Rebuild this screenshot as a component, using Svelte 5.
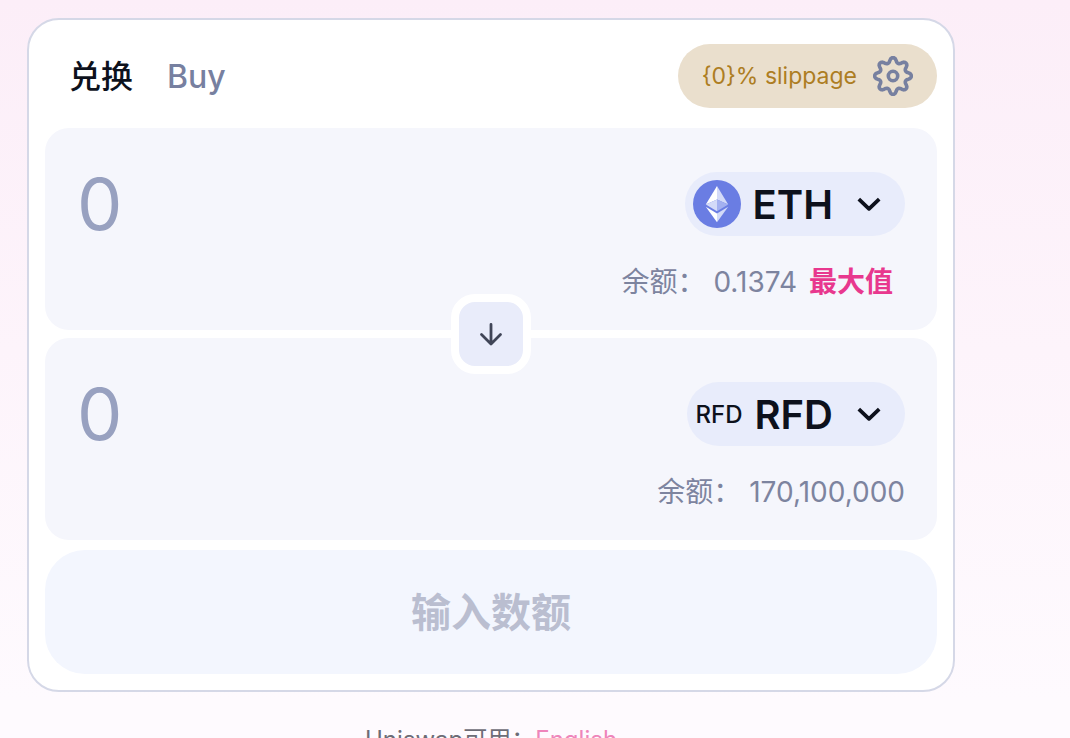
<script>
  let sell = $state('');
  let buy = $state('');

  // Outline of an eight-toothed gear with softly rounded teeth and valleys
  const gear = Array.from({ length: 96 }, (_, i) => {
    const t = (i / 96) * Math.PI * 2;
    const r = 15.9 + 2.4 * Math.tanh(1.2 * Math.cos(8 * t)) / Math.tanh(1.2);
    return `${(20 + r * Math.sin(t)).toFixed(2)},${(20 - r * Math.cos(t)).toFixed(2)}`;
  }).join(' ');
</script>

{#snippet chevron()}
  <svg class="chevron" width="24" height="16" viewBox="0 0 24 16" fill="none" aria-hidden="true">
    <path d="M1.8 3.2 12 12.8 22.2 3.2" stroke="currentColor" stroke-width="3.8" stroke-linejoin="round" />
  </svg>
{/snippet}

<main>
  <section class="card">
    <header>
      <nav>
        <a class="tab active" href="#swap">兑换</a>
        <a class="tab" href="#buy">Buy</a>
      </nav>
      <button class="slippage">
        <span>{'{0}% slippage'}</span>
        <svg width="40" height="40" viewBox="0 0 40 40" fill="none" stroke="#7780a0" stroke-width="3.6" stroke-linejoin="round" aria-hidden="true">
          <polygon points={gear} />
          <circle cx="20" cy="20" r="4.7" />
        </svg>
      </button>
    </header>

    <div class="panel">
      <div class="row">
        <input class="amount" placeholder="0" inputmode="decimal" aria-label="ETH" bind:value={sell} />
        <button class="token">
          <svg class="logo" width="48" height="48" viewBox="0 0 48 48" aria-hidden="true">
            <circle cx="24" cy="24" r="24" fill="#6a7de3" />
            <path d="M24 6 12.8 24.6 24 19.5Z" fill="#fff" />
            <path d="M24 6 35.2 24.6 24 19.5Z" fill="#d3daf8" />
            <path d="M24 19.5 12.8 24.6 24 31.2Z" fill="#d3daf8" />
            <path d="M24 19.5 35.2 24.6 24 31.2Z" fill="#a3b0f0" />
            <path d="M12.8 26.8 24 33.4V42.2Z" fill="#fff" />
            <path d="M35.2 26.8 24 33.4V42.2Z" fill="#d3daf8" />
          </svg>
          <span class="symbol">ETH</span>
          {@render chevron()}
        </button>
      </div>
      <div class="balance">
        <span>余额： 0.1374</span>
        <button class="max">最大值</button>
      </div>
    </div>

    <button class="switch" aria-label="切换">
      <svg width="24" height="24" viewBox="0 0 24 24" fill="none" stroke="#404557" stroke-width="2.8" stroke-linecap="round" stroke-linejoin="round" aria-hidden="true">
        <path d="M12 2.5V22M2.5 12.5 12 22 21.5 12.5" />
      </svg>
    </button>

    <div class="panel">
      <div class="row">
        <input class="amount" placeholder="0" inputmode="decimal" aria-label="RFD" bind:value={buy} />
        <button class="token">
          <span class="logo-text">RFD</span>
          <span class="symbol">RFD</span>
          {@render chevron()}
        </button>
      </div>
      <div class="balance">
        <span>余额： 170,100,000</span>
      </div>
    </div>

    <button class="submit" disabled>输入数额</button>
  </section>

  <footer>Uniswap可用：<a href="#en">English</a></footer>
</main>

<style>
  :global(body) {
    margin: 0;
    min-height: 100vh;
    background: linear-gradient(#fceef8, #fefafe 700px);
  }

  main,
  button,
  input {
    font-family: Inter, 'Noto Sans CJK SC', sans-serif;
  }

  main {
    padding: 18px 115px 0 27px;
    color: #0d111c;
  }

  button {
    border: 0;
    margin: 0;
    color: inherit;
    cursor: pointer;
  }

  a {
    text-decoration: none;
  }

  .card {
    display: flex;
    flex-direction: column;
    padding: 0 16px 16px;
    border: 2px solid #d5d8e7;
    border-radius: 32px;
    background: #fff;
  }

  header {
    display: flex;
    align-items: center;
    justify-content: space-between;
    padding: 24px 0 20px 24px;
  }

  nav {
    display: flex;
    gap: 34px;
    padding-top: 2px;
  }

  .tab {
    font-size: 32px;
    line-height: 40px;
    font-weight: 500;
    color: #7780a0;
  }

  .tab.active {
    color: #0d111c;
  }

  .slippage {
    display: flex;
    align-items: center;
    gap: 16px;
    height: 64px;
    padding: 0 24px;
    border-radius: 32px;
    background: #eadfcd;
    color: #ad7d22;
    font-size: 23px;
  }

  .panel {
    padding: 32px;
    border-radius: 24px;
    background: #f5f6fc;
  }

  .row {
    display: flex;
    align-items: center;
    height: 88px;
  }

  .amount {
    flex: 1;
    min-width: 0;
    padding: 0;
    border: 0;
    outline: 0;
    background: transparent;
    font-size: 72px;
    line-height: 88px;
    color: #0d111c;
  }

  .amount::placeholder {
    color: #98a1c0;
    opacity: 1;
  }

  .token {
    display: flex;
    align-items: center;
    height: 64px;
    padding: 0 24px 0 8px;
    border-radius: 32px;
    background: #e8ecfb;
  }

  .logo-text {
    font-size: 24px;
    font-weight: 500;
  }

  .symbol {
    margin: 0 24px 0 12px;
    font-size: 40px;
    font-weight: 600;
  }

  .balance {
    display: flex;
    justify-content: flex-end;
    margin-top: 16px;
    font-size: 28px;
    line-height: 36px;
    margin-bottom: -2px;
    color: #7d849f;
  }

  .max {
    padding: 0 12px;
    background: none;
    color: #e8388e;
    font-size: 28px;
    line-height: 36px;
    font-weight: 600;
  }

  .switch {
    display: grid;
    place-items: center;
    align-self: center;
    z-index: 1;
    width: 80px;
    height: 80px;
    margin: -36px 0;
    border: 8px solid #fff;
    border-radius: 24px;
    background: #e9ecfa;
  }

  .submit {
    margin-top: 10px;
    padding: 33px 32px 31px;
    border-radius: 40px;
    background: #f3f6fe;
    color: #babed0;
    font-size: 40px;
    line-height: 60px;
    font-weight: 600;
    cursor: default;
  }

  footer {
    margin-top: 32px;
    text-align: center;
    font-size: 24px;
    line-height: 32px;
    color: #6d6c76;
  }

  footer a {
    color: #ee86bb;
  }
</style>
